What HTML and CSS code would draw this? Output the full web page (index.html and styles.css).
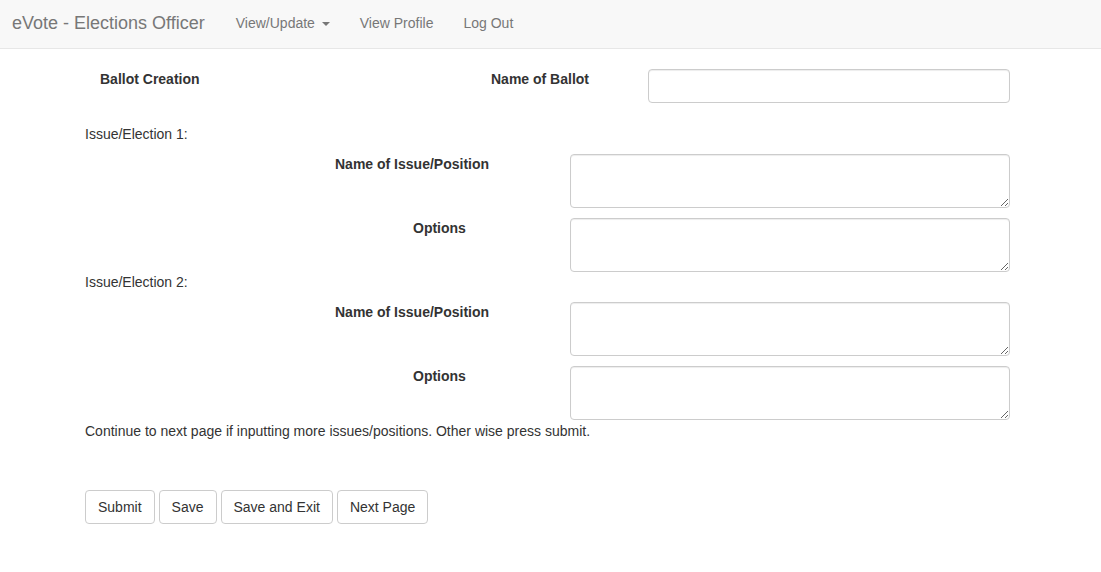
FILE: index.html
```html
<!DOCTYPE html>
<html>
<head>
<meta charset="utf-8">
<title>eVote - Elections Officer</title>
<link rel="stylesheet" href="styles.css">
</head>
<body>
<nav class="navbar">
  <a class="brand" href="#">eVote - Elections Officer</a>
  <ul class="nav">
    <li><a href="#">View/Update <span class="caret"></span></a></li>
    <li><a href="#">View Profile</a></li>
    <li><a href="#">Log Out</a></li>
  </ul>
</nav>
<main class="main">
  <div class="row-top">
    <div class="title">Ballot Creation</div>
    <label class="lbl">Name of Ballot</label>
    <input class="input" type="text">
  </div>
  <div class="issue">Issue/Election 1:</div>
  <div class="field">
    <label class="lbl lbl-name">Name of Issue/Position</label>
    <textarea class="area"></textarea>
  </div>
  <div class="field">
    <label class="lbl lbl-opt">Options</label>
    <textarea class="area"></textarea>
  </div>
  <div class="issue">Issue/Election 2:</div>
  <div class="field">
    <label class="lbl lbl-name">Name of Issue/Position</label>
    <textarea class="area"></textarea>
  </div>
  <div class="field">
    <label class="lbl lbl-opt">Options</label>
    <textarea class="area"></textarea>
  </div>
  <p class="note">Continue to next page if inputting more issues/positions. Other wise press submit.</p>
  <div class="buttons">
    <button class="btn">Submit</button>
    <button class="btn">Save</button>
    <button class="btn">Save and Exit</button>
    <button class="btn">Next Page</button>
  </div>
</main>
</body>
</html>
```
FILE: styles.css
```css
* { box-sizing: border-box; }
html, body { margin: 0; padding: 0; }
body {
  font-family: "Liberation Sans", Arial, sans-serif;
  font-size: 14px;
  line-height: 20px;
  color: #333;
  background: #fff;
}
.navbar {
  height: 49px;
  padding-bottom: 2px;
  background: #f8f8f8;
  border-bottom: 1px solid #e7e7e7;
  display: flex;
  align-items: center;
}
.brand {
  font-size: 18px;
  color: #777;
  text-decoration: none;
  padding: 0 16px 0 12px;
  line-height: 20px;
}
.nav {
  list-style: none;
  margin: 0;
  padding: 0;
  display: flex;
}
.nav a {
  display: block;
  padding: 0 15px;
  color: #777;
  text-decoration: none;
  line-height: 20px;
}
.caret {
  display: inline-block;
  width: 0;
  height: 0;
  margin-left: 3px;
  vertical-align: middle;
  border-top: 4px solid #777;
  border-left: 4px solid transparent;
  border-right: 4px solid transparent;
}
.main {
  padding: 20px 91px 0 85px;
}
.row-top {
  display: grid;
  grid-template-columns: 406px 157px 1fr;
  align-items: start;
}
.title {
  font-weight: bold;
  padding-left: 15px;
}
.lbl { font-weight: bold; }
.input {
  height: 34px;
  width: 100%;
  border: 1px solid #ccc;
  border-radius: 4px;
  box-shadow: inset 0 1px 1px rgba(0,0,0,.075);
  font: inherit;
  padding: 6px 12px;
  margin: 0;
}
.issue {
  margin-bottom: 10px;
}
.row-top + .issue { margin-top: 21px; }
.field {
  display: grid;
  grid-template-columns: 485px 1fr;
  align-items: start;
}
.field + .field { margin-top: 10px; }
.lbl-name { padding-left: 250px; }
.lbl-opt { padding-left: 328px; }
.area {
  display: block;
  height: 54px;
  width: 100%;
  border: 1px solid #ccc;
  border-radius: 4px;
  box-shadow: inset 0 1px 1px rgba(0,0,0,.075);
  font: inherit;
  padding: 6px 12px;
  margin: 0;
}
.note { margin: 1px 0 0; }
.buttons {
  display: flex;
  gap: 4px;
  margin-top: 49px;
}
.btn {
  height: 34px;
  padding: 6px 12px;
  font: inherit;
  color: #333;
  background: #fff;
  border: 1px solid #ccc;
  border-radius: 4px;
  margin: 0;
}
```
